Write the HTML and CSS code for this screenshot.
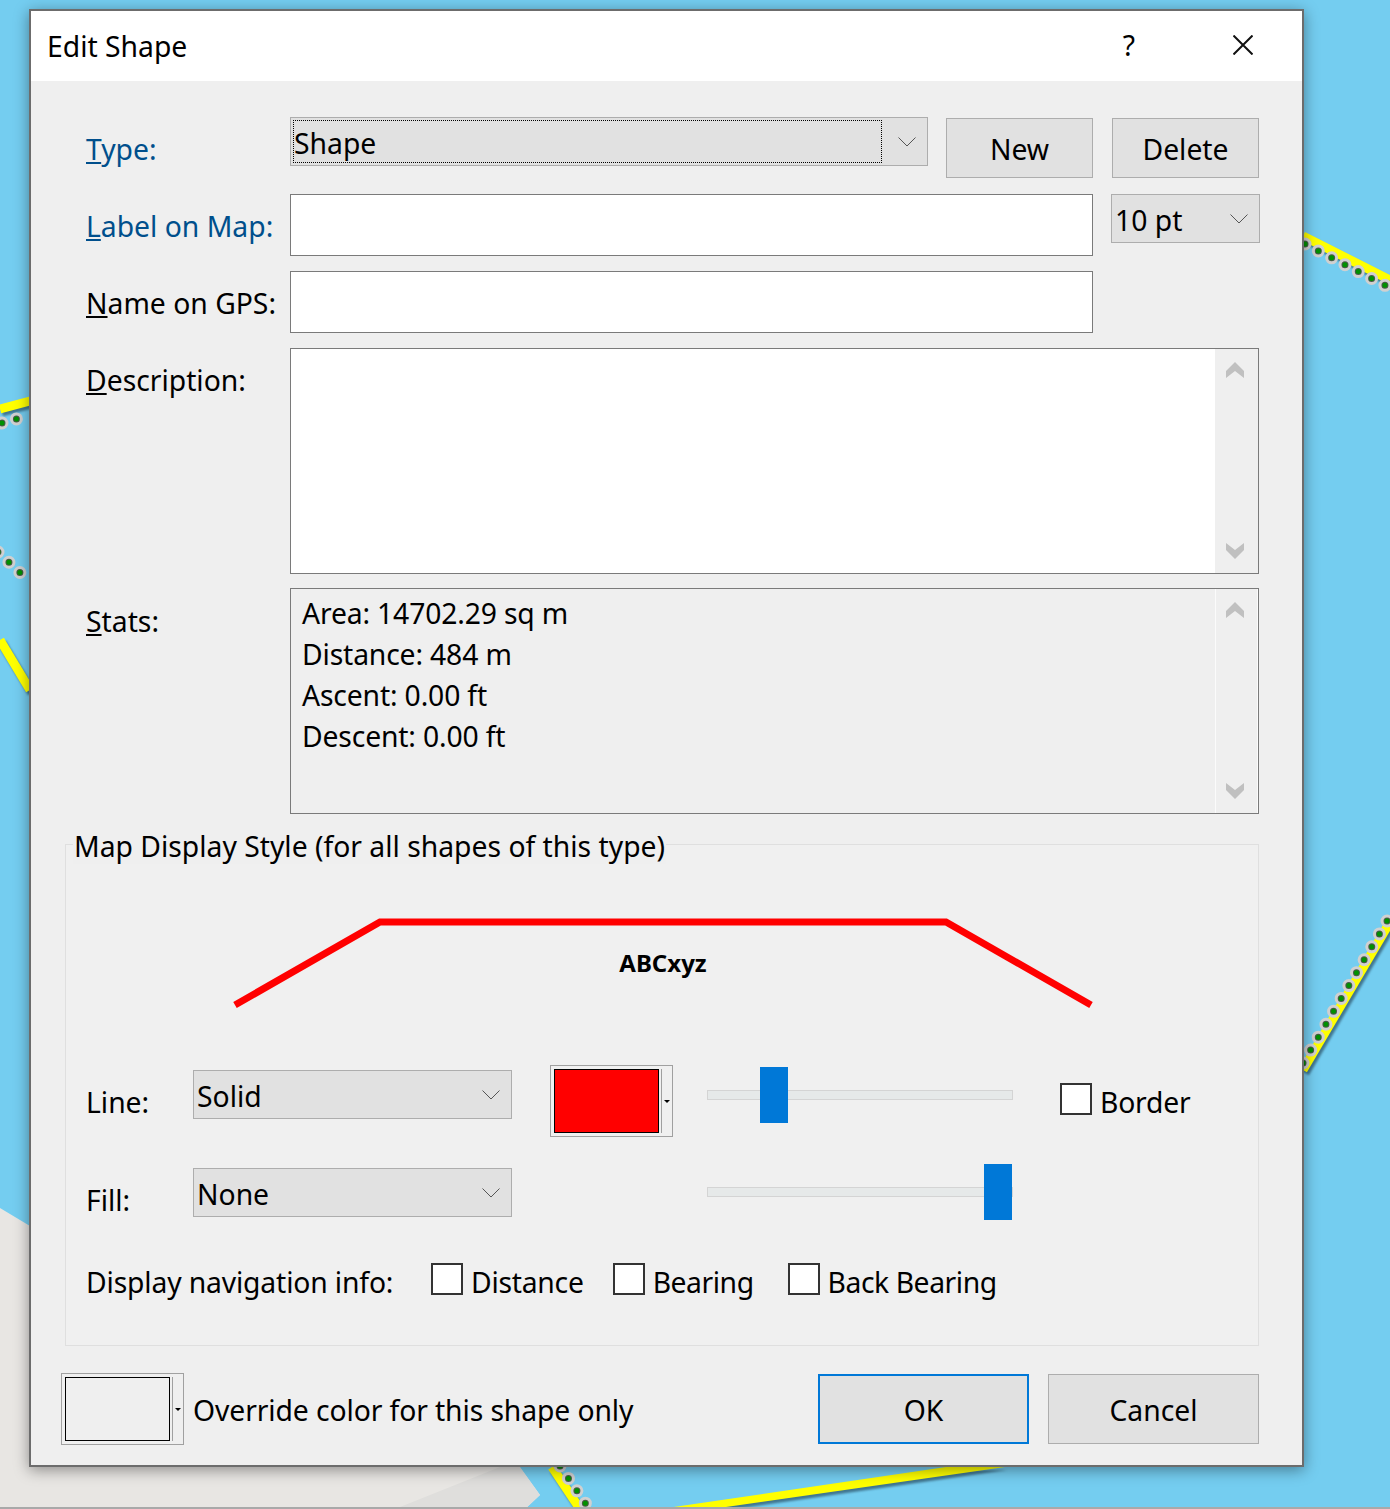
FILE: index.html
```html
<!DOCTYPE html>
<html lang="en">
<head>
  <meta charset="UTF-8">
  <title>Edit Shape</title>
  <link rel="stylesheet" href="styles.css">
</head>
<body>
  <svg class="map" width="1390" height="1509" viewBox="0 0 1390 1509">
    <rect x="-5" y="-5" width="1400" height="1519" fill="#74cdf0"/>
    <polygon class="land" points="0,1208 40,1232 60,1240 60,1400 500,1440 540,1495 525,1509 0,1509"/>
    <polygon class="land-dark" points="395,1509 420,1480 470,1467 520,1467 540,1495 525,1509"/>
    <polygon class="land" points="0,1467 500,1467 395,1509 0,1509"/>

    <g class="road">
      <polyline points="1303,236 1390,280"/>
      <polyline points="0,409 30,401"/>
      <polyline points="0,640 30,690"/>
      <polyline points="1303,1070 1390,922"/>
      <polyline points="552,1467 580,1509"/>
      <polygon class="road-fill" points="660,1509 946,1467 1005,1467 712,1509"/>
    </g>
    <g class="halo">
      <polyline points="1305,244 1390,288"/>
      <polyline points="2,423 30,415"/>
      <polyline points="-2,552 30,582"/>
      <polyline points="1303,1063 1390,916"/>
      <polyline points="560,1466 590,1510"/>
    </g>
    <g class="ring">
      <polyline points="1305,244 1390,288"/>
      <polyline points="2,423 30,415"/>
      <polyline points="-2,552 30,582"/>
      <polyline points="1303,1063 1390,916"/>
      <polyline points="560,1466 590,1510"/>
    </g>
    <g class="dots">
      <polyline points="1305,244 1390,288"/>
      <polyline points="2,423 30,415"/>
      <polyline points="-2,552 30,582"/>
      <polyline points="1303,1063 1390,916"/>
      <polyline points="560,1466 590,1510"/>
    </g>
  </svg>
  <div class="map-edge"></div>

  <div class="dialog">
    <div class="titlebar">
      <span class="title">Edit Shape</span>
      <span class="help">?</span>
      <svg class="close" width="20" height="20" viewBox="0 0 20 20"><path d="M0.5 0.5L19.5 19.5M19.5 0.5L0.5 19.5"/></svg>
    </div>

    <div class="content">
      <div class="row row-type">
        <label class="lbl lbl-link lbl-type"><u>T</u>ype:</label>
        <div class="combo combo-type">
          <span class="focus">Shape</span>
          <svg class="chev" width="18" height="10" viewBox="0 0 18 10"><path d="M0.5 0.5L9 9L17.5 0.5"/></svg>
        </div>
        <button class="btn btn-new">New</button>
        <button class="btn btn-delete">Delete</button>
      </div>

      <div class="row row-label">
        <label class="lbl lbl-link"><u>L</u>abel on Map:</label>
        <input class="field" type="text">
        <div class="combo combo-pt">
          <span>10 pt</span>
          <svg class="chev" width="18" height="10" viewBox="0 0 18 10"><path d="M0.5 0.5L9 9L17.5 0.5"/></svg>
        </div>
      </div>

      <div class="row row-name">
        <label class="lbl"><u>N</u>ame on GPS:</label>
        <input class="field" type="text">
      </div>

      <div class="row row-desc">
        <label class="lbl lbl-desc"><u>D</u>escription:</label>
        <div class="box box-white">
          <div class="box-text"></div>
          <div class="scroll">
            <svg width="18" height="16" viewBox="0 0 18 16"><polygon points="0,9 9,0 18,9 18,16 9,9 0,16"/></svg>
            <svg width="18" height="16" viewBox="0 0 18 16"><polygon points="0,0 9,7 18,0 18,7 9,16 0,7"/></svg>
          </div>
        </div>
      </div>

      <div class="row row-stats">
        <label class="lbl lbl-stats"><u>S</u>tats:</label>
        <div class="box">
          <div class="box-text">
            <div>Area: 14702.29 sq m</div>
            <div>Distance: 484 m</div>
            <div>Ascent: 0.00 ft</div>
            <div>Descent: 0.00 ft</div>
          </div>
          <div class="scroll scroll-ro">
            <svg width="18" height="16" viewBox="0 0 18 16"><polygon points="0,9 9,0 18,9 18,16 9,9 0,16"/></svg>
            <svg width="18" height="16" viewBox="0 0 18 16"><polygon points="0,0 9,7 18,0 18,7 9,16 0,7"/></svg>
          </div>
        </div>
      </div>

      <div class="group">
        <span class="legend">Map Display Style (for all shapes of this type)</span>
        <svg class="preview" width="1192" height="100" viewBox="0 0 1192 100">
          <polyline points="169,93 314,10 880,10 1025,93"/>
          <text x="597" y="60" text-anchor="middle">ABCxyz</text>
        </svg>

        <div class="style-row">
          <label class="lbl style-lbl lbl-line">Line:</label>
          <div class="combo combo-style combo-line"><span>Solid</span>
            <svg class="chev" width="18" height="10" viewBox="0 0 18 10"><path d="M0.5 0.5L9 9L17.5 0.5"/></svg>
          </div>
          <div class="swatch-btn">
            <span class="swatch swatch-red"></span>
            <span class="swatch-arrow"></span>
          </div>
          <div class="slider slider-line"><span class="track"></span><span class="thumb thumb-line"></span></div>
          <label class="check check-border"><input type="checkbox">Border</label>
        </div>

        <div class="style-row style-row-fill">
          <label class="lbl style-lbl lbl-fill">Fill:</label>
          <div class="combo combo-style combo-fill"><span>None</span>
            <svg class="chev" width="18" height="10" viewBox="0 0 18 10"><path d="M0.5 0.5L9 9L17.5 0.5"/></svg>
          </div>
          <div class="swatch-space"></div>
          <div class="slider slider-fill"><span class="track"></span><span class="thumb thumb-fill"></span></div>
        </div>

        <div class="nav-row">
          <span class="nav-lbl">Display navigation info:</span>
          <label class="check check-dist"><input type="checkbox">Distance</label>
          <label class="check check-bear"><input type="checkbox">Bearing</label>
          <label class="check check-back"><input type="checkbox">Back Bearing</label>
        </div>
      </div>

      <div class="bottom">
        <div class="swatch-btn">
          <span class="swatch"></span>
          <span class="swatch-arrow"></span>
        </div>
        <span class="override">Override color for this shape only</span>
        <button class="btn btn-ok">OK</button>
        <button class="btn btn-cancel">Cancel</button>
      </div>
    </div>
  </div>
</body>
</html>
```

FILE: styles.css
```css
html, body {
  margin: 0;
  padding: 0;
}
body {
  width: 1390px;
  height: 1509px;
  overflow: hidden;
  position: relative;
  background: #74cdf0;
  font-family: "Noto Sans", sans-serif;
  font-size: 28.3px;
  color: #000;
}
.map {
  position: absolute;
  left: 0;
  top: 0;
  filter: blur(0.6px);
}
.map-edge {
  position: absolute;
  left: 0;
  top: 1507px;
  width: 100%;
  height: 2px;
  background: #a9a9a9;
}
.land { fill: #e8e6e3; }
.land-dark { fill: #dfdedc; }
.road {
  filter: drop-shadow(2px 3px 1px rgba(30,60,80,0.6));
}
.road polyline {
  fill: none;
  stroke: #ff0;
  stroke-width: 9;
}
.road-fill { fill: #ff0; }
.halo polyline, .ring polyline, .dots polyline {
  fill: none;
  stroke-linecap: round;
  stroke-dasharray: 0 15;
}
.halo polyline {
  stroke: #d0d0d0;
  stroke-width: 13;
}
.ring polyline {
  stroke: #4a5a4a;
  stroke-width: 7;
}
.dots polyline {
  stroke: #009000;
  stroke-width: 5;
}

.dialog {
  position: absolute;
  left: 29px;
  top: 9px;
  width: 1271px;
  height: 1454px;
  border: 2px solid rgba(0,0,0,0.55);
  background: #efefef;
  box-shadow: 0 3px 14px rgba(0,0,0,0.4);
}
.titlebar {
  height: 70px;
  background: #fff;
  display: flex;
  align-items: center;
  padding: 0 49px 0 16px;
}
.title {
  flex: 1;
}
.help {
  margin-top: -3px;
  margin-right: 98px;
}
.close {
  margin-top: -3px;
}
.close path {
  fill: none;
  stroke: #111;
  stroke-width: 2;
}

.content {
  padding: 36px 43px 0 56px;
}
.row {
  display: flex;
  align-items: flex-start;
}
.row-type { height: 61px; }
.row-label { margin-top: 16px; height: 62px; }
.row-name { margin-top: 15px; height: 62px; }
.row-desc { margin-top: 15px; }
.row-stats { margin-top: 14px; }

.lbl {
  width: 204px;
  margin-left: -1px;
  flex: none;
  line-height: 64px;
  white-space: nowrap;
}
.lbl-link { color: #004f8c; }
.lbl-desc { line-height: 64px; }
.lbl-stats { line-height: 66px; }

.combo {
  box-sizing: border-box;
  height: 49px;
  background: #e1e1e1;
  border: 1px solid #adadad;
  display: flex;
  align-items: center;
  justify-content: space-between;
  padding: 0 11px 0 3px;
  line-height: 44px;
  flex: none;
}
.combo > span {
  padding-top: 3px;
}
.chev path {
  fill: none;
  stroke: #555;
  stroke-width: 1;
}
.combo-type {
  width: 638px;
  padding: 2px 11px 2px 2px;
}
.combo > .focus {
  box-sizing: border-box;
  width: 589px;
  height: 43px;
  border: 1px dotted #000;
  padding: 0;
  line-height: 44px;
}
.combo-pt {
  width: 149px;
  margin-left: 18px;
  margin-right: -1px;
}

.btn {
  box-sizing: border-box;
  background: #e1e1e1;
  border: 1px solid #adadad;
  font: inherit;
  color: #000;
  padding: 0;
}
.btn-new, .btn-delete {
  width: 147px;
  height: 60px;
  margin-top: 1px;
  padding-top: 2px;
}
.btn-new { margin-left: 18px; }
.btn-delete { margin-left: 19px; }

.field {
  box-sizing: border-box;
  width: 803px;
  height: 62px;
  background: #fff;
  border: 1px solid #7a7a7a;
  border-radius: 0;
  outline: none;
  flex: none;
}

.box {
  box-sizing: border-box;
  width: 969px;
  height: 226px;
  border: 1px solid #7a7a7a;
  background: #efefef;
  display: flex;
  flex: none;
}
.box-white { background: #fff; }
.box-text {
  flex: 1;
  padding: 4px 0 0 11px;
  line-height: 41px;
  letter-spacing: -0.15px;
}
.scroll {
  box-sizing: border-box;
  width: 43px;
  background: #efefef;
  display: flex;
  flex-direction: column;
  justify-content: space-between;
  align-items: center;
  padding: 13px 4px 14px 0;
}
.scroll-ro {
  border-left: 1px solid #fbfbfb;
  box-shadow: inset -1px 0 0 #fbfbfb;
}
.scroll polygon { fill: #c0c0c0; }

.group {
  box-sizing: border-box;
  position: relative;
  width: 1194px;
  height: 502px;
  margin: 30px 0 0 -22px;
  border: 1px solid #dfdfdf;
  background: #f0f0f0;
}
.legend {
  position: absolute;
  left: 7px;
  top: -17px;
  padding: 0 1px;
  line-height: 36px;
  background: #efefef;
  white-space: nowrap;
}
.preview {
  display: block;
  margin-top: 67px;
}
.preview polyline {
  fill: none;
  stroke: #f00;
  stroke-width: 7;
}
.preview text {
  font-family: "Noto Sans", sans-serif;
  font-size: 24px;
  font-weight: 700;
}

.style-row {
  display: flex;
  align-items: flex-start;
  height: 72px;
  margin-top: 53px;
  padding-left: 21px;
}
.style-row-fill {
  height: 56px;
  margin-top: 27px;
}
.style-lbl {
  width: 107px;
  line-height: 36px;
}
.lbl-line { margin-top: 19px; }
.lbl-fill { margin-top: 18px; }
.combo-style { width: 319px; }
.combo-line { margin-top: 5px; }
.combo-fill { margin-top: 4px; }

.swatch-btn {
  box-sizing: border-box;
  width: 123px;
  height: 72px;
  border: 1px solid #a0a0a0;
  display: flex;
  align-items: center;
  flex: none;
  padding-left: 3px;
}
.style-row .swatch-btn { margin-left: 38px; }
.swatch {
  box-sizing: border-box;
  width: 105px;
  height: 64px;
  border: 1px solid #000;
}
.swatch-red { background: #f00; }
.swatch-arrow {
  box-sizing: border-box;
  width: 11px;
  height: 64px;
  margin-left: 2px;
  border-left: 1px solid #a0a0a0;
  display: flex;
  align-items: center;
  justify-content: center;
}
.swatch-arrow::after {
  content: "";
  border-left: 3px solid transparent;
  border-right: 3px solid transparent;
  border-top: 3px solid #000;
}
.swatch-space {
  width: 123px;
  margin-left: 38px;
  flex: none;
}

.slider {
  position: relative;
  width: 306px;
  height: 56px;
  margin-left: 34px;
  flex: none;
}
.slider-line { margin-top: 2px; }
.track {
  box-sizing: border-box;
  display: block;
  height: 10px;
  margin-top: 23px;
  background: #e6e9e9;
  border: 1px solid #d4d4d4;
}
.thumb {
  position: absolute;
  top: 0;
  width: 28px;
  height: 56px;
  background: #0078d7;
}
.thumb-line { left: 53px; }
.thumb-fill { left: 277px; }

.check {
  display: flex;
  align-items: center;
  line-height: 36px;
  white-space: nowrap;
}
.check input {
  appearance: none;
  box-sizing: border-box;
  width: 32px;
  height: 32px;
  margin: -6px 8px 0 0;
  background: #fff;
  border: 2px solid #333;
  border-radius: 0;
  flex: none;
}
.check-border {
  margin-left: 47px;
  margin-top: 19px;
  letter-spacing: -0.2px;
}

.nav-row {
  display: flex;
  align-items: center;
  height: 36px;
  margin-top: 44px;
  padding-left: 21px;
}
.nav-lbl {
  width: 345px;
  margin-left: -1px;
  flex: none;
  white-space: nowrap;
  letter-spacing: -0.15px;
}
.check-dist { letter-spacing: -0.25px; }
.check-bear {
  margin-left: 29px;
  letter-spacing: -0.45px;
}
.check-back {
  margin-left: 34px;
  letter-spacing: -0.45px;
}

.bottom {
  display: flex;
  align-items: flex-start;
  margin: 27px 0 0 -26px;
}
.override {
  margin-left: 9px;
  line-height: 74px;
  white-space: nowrap;
  letter-spacing: -0.1px;
}
.btn-ok, .btn-cancel {
  width: 211px;
  height: 70px;
  margin-top: 1px;
  padding-top: 2px;
}
.btn-ok {
  margin-left: auto;
  border: 2px solid #0078d7;
}
.btn-cancel { margin-left: 19px; }
```
